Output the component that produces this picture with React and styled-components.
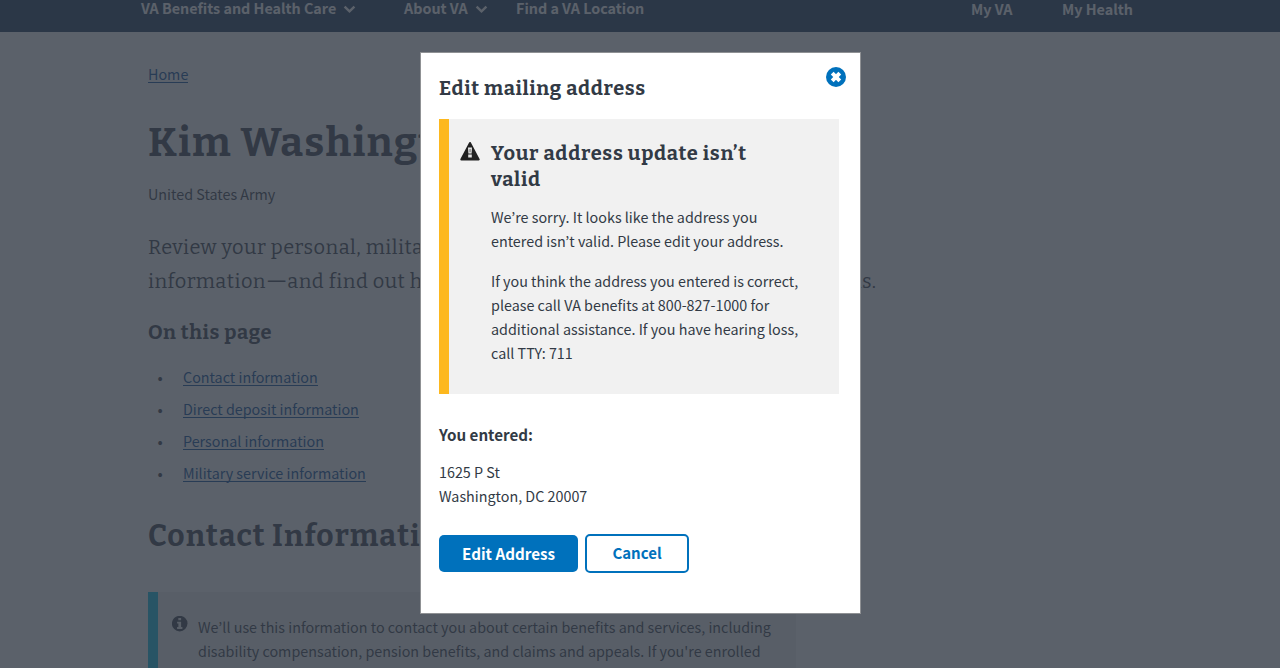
import React from "react";
import styled, { createGlobalStyle } from "styled-components";

const sans = `"Source Sans Pro", "Noto Sans CJK JP", "Noto Sans", sans-serif`;
const serif = `"Bitter", "DejaVu Serif Condensed", "DejaVu Serif", serif`;

const GlobalStyle = createGlobalStyle`
  *, *::before { box-sizing: border-box; }
  body { margin: 0; background: #fff; color: #323a45; overflow: hidden;
    font: 400 14.33px/24px ${sans}; }
  h1, h2, h3, h4, p, ul { margin: 0; padding: 0; }
`;

const Page = styled.div`
  height: 668px;
  overflow: hidden;
`;

const NavBar = styled.header`
  height: 32px;
  padding: 0 147px 0 141px;
  background: #112e51;
  color: #fff;
  display: flex;
  font-weight: 700;
  line-height: 16px;
  white-space: nowrap;
`;

const NavItem = styled.a`
  display: flex;
  align-items: center;
  height: 16px;
  width: ${(p) => p.$width}px;
  margin-top: ${(p) => p.$drop || 0}px;
  margin-left: ${(p) => (p.$end ? "auto" : 0)};
  svg { margin: 3px 0 0 7px; }
`;

const Main = styled.main`
  padding: 28px 0 0 148px;
  width: 948px;
`;

const Link = styled.a`
  color: #004795;
  border-bottom: 1px solid #004795;
  display: inline-block;
  line-height: 17px;
  height: 18px;
`;

const Crumbs = styled.nav`
  height: 24px;
  padding-top: 2px;
`;

const Title = styled.h1`
  margin-top: 33px;
  font: 700 40.5px/52px ${serif};
  letter-spacing: 1.25px;
`;

const Branch = styled.p`
  margin-top: 13px;
`;

const Intro = styled.p`
  margin-top: 24px;
  font: 400 20px/34px ${serif};
  letter-spacing: 0.47px;
  white-space: nowrap;
`;

const Dash = styled.span`
  font-size: 24.5px;
  line-height: 0;
  letter-spacing: 0;
`;

const SubTitle = styled.h3`
  margin-top: 20px;
  font: 700 20px/28px ${serif};
  letter-spacing: 0.63px;
`;

const LinkList = styled.ul`
  margin-top: 16px;
  list-style: none;
`;

const LinkRow = styled.li`
  display: flex;
  height: 32px;
  padding-top: 6px;
  &::before { content: "•"; width: 35px; padding-left: 9.5px; font-size: 15.5px; line-height: 18px; }
`;

const Section = styled.h2`
  margin-top: 26px;
  font: 700 30px/40px ${serif};
  letter-spacing: 1.05px;
`;

const Notice = styled.section`
  display: flex;
  width: 648px;
  height: 160px;
  margin-top: 36px;
  padding: 23px 0 0 14px;
  background: #f1f1f1;
  border-left: 10px solid #02bfe7;
  svg { flex: none; margin: 1px 10px 0 0; }
  p { white-space: nowrap; }
`;

const Overlay = styled.div`
  position: fixed;
  inset: 0;
  background: rgba(50, 58, 69, 0.8);
  display: flex;
  align-items: flex-start;
  justify-content: center;
  padding: 52px 0 0 1px;
`;

const Dialog = styled.div`
  position: relative;
  width: 441px;
  height: 562px;
  padding: 21px 21px 0 18px;
  background: #fff;
  border: 1px solid #8f9194;
`;

const CloseButton = styled.button`
  position: absolute;
  top: 14px;
  right: 14px;
  width: 20px;
  height: 20px;
  padding: 0;
  border: 0;
  background: none;
  svg { display: block; }
`;

const DialogTitle = styled.h3`
  font: 700 20px/28px ${serif};
  letter-spacing: 0.63px;
  white-space: nowrap;
`;

const Alert = styled.section`
  display: flex;
  width: 400px;
  height: 275px;
  margin-top: 17px;
  padding: 21px 0 0 10px;
  border-left: 10px solid #fdb81e;
  background: #f1f1f1;
  svg { flex: none; margin: 1px 11px 0 1px; }
`;

const AlertTitle = styled.h4`
  font: 700 20px/26px ${serif};
  letter-spacing: 0.7px;
  white-space: nowrap;
`;

const AlertText = styled.p`
  margin-top: ${(p) => p.$gap}px;
  white-space: nowrap;
`;

const Label = styled.p`
  margin-top: 28px;
  font-size: 15.2px;
  font-weight: 700;
`;

const Address = styled.p`
  margin-top: 14px;
`;

const Actions = styled.div`
  display: flex;
  align-items: center;
  gap: 7px;
  margin-top: 26px;
`;

const Button = styled.button`
  width: ${(p) => p.$width}px;
  height: ${(p) => (p.$outline ? 39 : 37)}px;
  padding: 0 0 2px;
  border: ${(p) => (p.$outline ? "2px solid #0071bc" : "0")};
  border-radius: 5px;
  background: ${(p) => (p.$outline ? "#fff" : "#0071bc")};
  color: ${(p) => (p.$outline ? "#0071bc" : "#fff")};
  font: 700 ${(p) => (p.$outline ? 15 : 15.2)}px/24px ${sans};
`;

const Chevron = () => (
  <svg width="13" height="9" viewBox="0 0 13 9">
    <path d="M1.6 1.6 6.5 6.4 11.4 1.6" fill="none" stroke="#fff" strokeWidth="2.4" />
  </svg>
);

const CloseIcon = () => (
  <svg width="20" height="20" viewBox="0 0 20 20">
    <circle cx="10" cy="10" r="10" fill="#0071bc" />
    <path d="M6.2 6.2 13.8 13.8M13.8 6.2 6.2 13.8" stroke="#fff" strokeWidth="4" />
  </svg>
);

const WarningIcon = () => (
  <svg width="20" height="20" viewBox="0 0 20 20">
    <path d="M10 2 18.7 18.4H1.3Z" fill="#212121" stroke="#212121" strokeWidth="2" strokeLinejoin="round" />
    <path d="M8 6.6h4l-.4 5.8H8.4ZM8.2 13.6h3.6v2.8H8.2Z" fill="#e4e4e4" />
    <path d="M9.6 8h.9v3.2h-.9Z" fill="#555" />
  </svg>
);

const InfoIcon = () => (
  <svg width="16" height="16" viewBox="0 0 16 16">
    <circle cx="7.7" cy="7.6" r="7.8" fill="#323a45" />
    <path d="M6.3 2h2.8v2.3H6.3ZM5.1 5.7h4v5.4h1.3v1.8H5.1v-1.8h1.3V7.5H5.1Z" fill="#f1f1f1" />
  </svg>
);

export default function App() {
  return (
    <>
      <GlobalStyle />
      <Page>
        <NavBar>
          <NavItem $width={263}>VA Benefits and Health Care<Chevron /></NavItem>
          <NavItem $width={112}>About VA<Chevron /></NavItem>
          <NavItem $width={140}>Find a VA Location</NavItem>
          <NavItem $width={91} $drop={1} $end>My VA</NavItem>
          <NavItem $width={71} $drop={1}>My Health</NavItem>
        </NavBar>
        <Main>
          <Crumbs><Link>Home</Link></Crumbs>
          <Title>Kim Washington</Title>
          <Branch>United States Army</Branch>
          <Intro>
            Review your personal, military, financial, and contact<br />
            information<Dash>—</Dash>and find out how to make any needed updates or corrections.
          </Intro>
          <SubTitle>On this page</SubTitle>
          <LinkList>
            <LinkRow><Link>Contact information</Link></LinkRow>
            <LinkRow><Link>Direct deposit information</Link></LinkRow>
            <LinkRow><Link>Personal information</Link></LinkRow>
            <LinkRow><Link>Military service information</Link></LinkRow>
          </LinkList>
          <Section>Contact Information</Section>
          <Notice>
            <InfoIcon />
            <p>
              We’ll use this information to contact you about certain benefits and services, including<br />
              disability compensation, pension benefits, and claims and appeals. If you're enrolled
            </p>
          </Notice>
        </Main>
      </Page>
      <Overlay>
        <Dialog role="dialog">
          <CloseButton aria-label="Close"><CloseIcon /></CloseButton>
          <DialogTitle>Edit mailing address</DialogTitle>
          <Alert>
            <WarningIcon />
            <div>
              <AlertTitle>Your address update isn’t<br />valid</AlertTitle>
              <AlertText $gap={13}>
                We’re sorry. It looks like the address you<br />
                entered isn’t valid. Please edit your address.
              </AlertText>
              <AlertText $gap={16}>
                If you think the address you entered is correct,<br />
                please call VA benefits at 800-827-1000 for<br />
                additional assistance. If you have hearing loss,<br />
                call TTY: 711
              </AlertText>
            </div>
          </Alert>
          <Label>You entered:</Label>
          <Address>1625 P St<br />Washington, DC 20007</Address>
          <Actions>
            <Button $width={139}>Edit Address</Button>
            <Button $width={104} $outline>Cancel</Button>
          </Actions>
        </Dialog>
      </Overlay>
    </>
  );
}
